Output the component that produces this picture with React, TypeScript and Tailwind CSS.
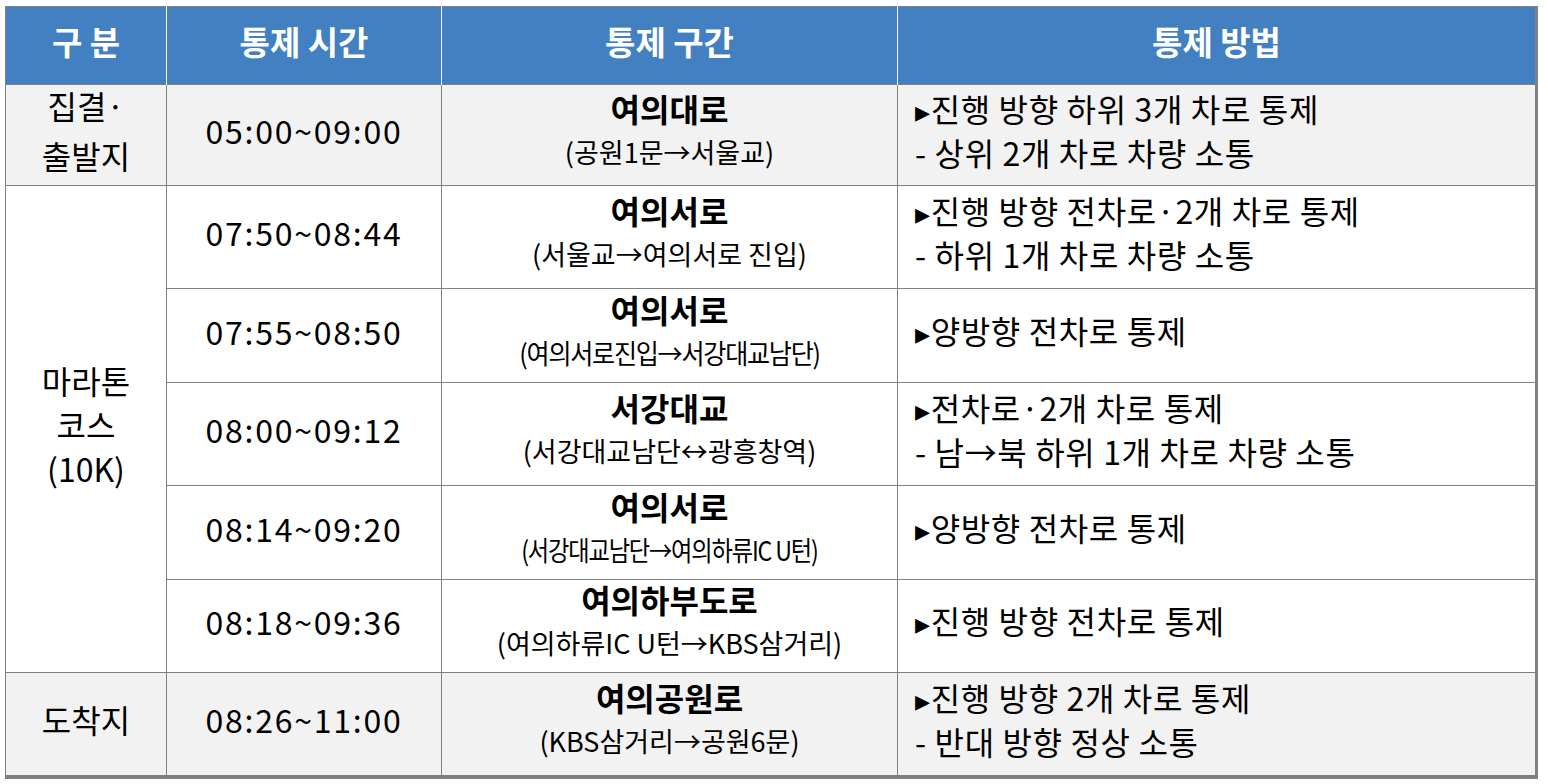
const font = { fontFamily: '"Noto Sans CJK KR", "Noto Sans", sans-serif' }

type Row = {
  time: string
  title: string
  sub: string
  squeeze?: string
  method: string[]
  h: string
}

const rows: Row[] = [
  { time: '05:00~09:00', title: '여의대로', sub: '(공원1문→서울교)', method: ['▸진행 방향 하위 3개 차로 통제', '- 상위 2개 차로 차량 소통'], h: 'h-[100px]' },
  { time: '07:50~08:44', title: '여의서로', sub: '(서울교→여의서로 진입)', method: ['▸진행 방향 전차로·2개 차로 통제', '- 하위 1개 차로 차량 소통'], h: 'h-[103px]' },
  { time: '07:55~08:50', title: '여의서로', sub: '(여의서로진입→서강대교남단)', squeeze: 'scale-x-[0.93]', method: ['▸양방향 전차로 통제'], h: 'h-[94px]' },
  { time: '08:00~09:12', title: '서강대교', sub: '(서강대교남단↔광흥창역)', method: ['▸전차로·2개 차로 통제', '- 남→북 하위 1개 차로 차량 소통'], h: 'h-[103px]' },
  { time: '08:14~09:20', title: '여의서로', sub: '(서강대교남단→여의하류IC U턴)', squeeze: 'scale-x-[0.86]', method: ['▸양방향 전차로 통제'], h: 'h-[94px]' },
  { time: '08:18~09:36', title: '여의하부도로', sub: '(여의하류IC U턴→KBS삼거리)', method: ['▸진행 방향 전차로 통제'], h: 'h-[93px]' },
  { time: '08:26~11:00', title: '여의공원로', sub: '(KBS삼거리→공원6문)', method: ['▸진행 방향 2개 차로 통제', '- 반대 방향 정상 소통'], h: 'h-[103px]' },
]

const cell = 'border border-[#808080] align-middle'
// Noto CJK sits a little low in its line box; nudge content up to match
const lift = '-translate-y-[5px]'

function Line({ text }: { text: string }) {
  if (text.startsWith('▸')) {
    return (
      <div className="whitespace-nowrap">
        <span className="text-[30px]">▸</span>
        {text.slice(1)}
      </div>
    )
  }
  return <div className="whitespace-nowrap">{text}</div>
}

export default function App() {
  return (
    <div className="min-h-screen bg-white pl-[5px] pt-[6px]" style={font}>
      <div className="w-[1533px] border-r-[3px] border-b-[3px] border-[#808080]">
        <table className="w-[1530px] table-fixed border-collapse text-black">
          <colgroup>
            <col className="w-[161px]" />
            <col className="w-[275px]" />
            <col className="w-[456px]" />
            <col className="w-[638px]" />
          </colgroup>
          <thead>
            <tr className="h-[78px] bg-[#4280c1] text-[33px] font-bold text-white">
              <th className="border-t border-l border-[#808080] border-r border-r-white pb-[7px]">구 분</th>
              <th className="border-t border-[#808080] border-r border-r-white pb-[7px]">통제 시간</th>
              <th className="border-t border-[#808080] border-r border-r-white pb-[7px]">통제 구간</th>
              <th className="border-t border-r border-[#808080] pb-[7px]">통제 방법</th>
            </tr>
          </thead>
          <tbody>
            {rows.map((r, i) => {
              const grey = i === 0 || i === 6
              return (
                <tr key={i} className={`${r.h} ${grey ? 'bg-[#f2f2f2]' : 'bg-white'}`}>
                  {i === 0 && (
                    <td className={`${cell} text-center text-[32px] leading-[50px]`}>
                      <div className={lift}>
                        집결·
                        <br />
                        출발지
                      </div>
                    </td>
                  )}
                  {i === 1 && (
                    <td rowSpan={5} className={`${cell} bg-white text-center text-[32px] leading-[44px]`}>
                      <div className={lift}>
                        마라톤
                        <br />
                        코스
                        <br />
                        (10K)
                      </div>
                    </td>
                  )}
                  {i === 6 && (
                    <td className={`${cell} text-center text-[32px]`}>
                      <div className={lift}>도착지</div>
                    </td>
                  )}
                  <td className={`${cell} text-center text-[32px] tracking-[0.055em]`}>
                    <div className={lift}>{r.time}</div>
                  </td>
                  <td className={`${cell} text-center leading-[44px]`}>
                    <div className={lift}>
                      <div className="text-[32px] font-bold">{r.title}</div>
                      <div className="text-[27px]">
                        {r.squeeze ? (
                          <span className={`inline-block ${r.squeeze} tracking-[-0.05em] whitespace-nowrap`}>{r.sub}</span>
                        ) : (
                          r.sub
                        )}
                      </div>
                    </div>
                  </td>
                  <td className={`${cell} pl-[17px] text-[32px] leading-[43px] tracking-[0.02em]`}>
                    <div className={lift}>
                      {r.method.map((m, j) => (
                        <Line key={j} text={m} />
                      ))}
                    </div>
                  </td>
                </tr>
              )
            })}
          </tbody>
        </table>
      </div>
    </div>
  )
}
